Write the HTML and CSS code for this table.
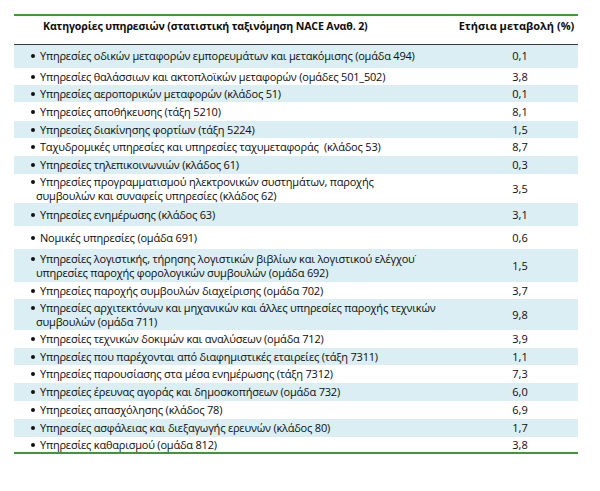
FILE: index.html
```html
<!DOCTYPE html>
<html lang="el">
<head>
<meta charset="utf-8">
<title>Ετήσια μεταβολή</title>
<link rel="stylesheet" href="styles.css">
</head>
<body>
<table class="tbl">
  <thead>
    <tr class="head">
      <th class="c-cat">Κατηγορίες υπηρεσιών (στατιστική ταξινόμηση NACE Αναθ. 2)</th>
      <th class="c-val">Ετήσια μεταβολή (%)</th>
    </tr>
  </thead>
  <tbody>
    <tr class="blue h24"><td class="cat">Υπηρεσίες οδικών μεταφορών εμπορευμάτων και μετακόμισης (ομάδα 494)</td><td class="val">0,1</td></tr>
    <tr class="h17"><td class="cat">Υπηρεσίες θαλάσσιων και ακτοπλοϊκών μεταφορών (ομάδες 501_502)</td><td class="val">3,8</td></tr>
    <tr class="blue h17"><td class="cat">Υπηρεσίες αεροπορικών μεταφορών (κλάδος 51)</td><td class="val">0,1</td></tr>
    <tr class="h19"><td class="cat">Υπηρεσίες αποθήκευσης (τάξη 5210)</td><td class="val">8,1</td></tr>
    <tr class="blue h17"><td class="cat">Υπηρεσίες διακίνησης φορτίων (τάξη 5224)</td><td class="val">1,5</td></tr>
    <tr class="h18"><td class="cat">Ταχυδρομικές υπηρεσίες και υπηρεσίες ταχυμεταφοράς &nbsp;(κλάδος 53)</td><td class="val">8,7</td></tr>
    <tr class="blue h18"><td class="cat">Υπηρεσίες τηλεπικοινωνιών (κλάδος 61)</td><td class="val">0,3</td></tr>
    <tr class="h29"><td class="cat">Υπηρεσίες προγραμματισμού ηλεκτρονικών συστημάτων, παροχής<br>συμβουλών και συναφείς υπηρεσίες (κλάδος 62)</td><td class="val">3,5</td></tr>
    <tr class="blue h23"><td class="cat">Υπηρεσίες ενημέρωσης (κλάδος 63)</td><td class="val">3,1</td></tr>
    <tr class="h23"><td class="cat">Νομικές υπηρεσίες (ομάδα 691)</td><td class="val">0,6</td></tr>
    <tr class="blue h33"><td class="cat">Υπηρεσίες λογιστικής, τήρησης λογιστικών βιβλίων και λογιστικού ελέγχου˙<br>υπηρεσίες παροχής φορολογικών συμβουλών (ομάδα 692)</td><td class="val">1,5</td></tr>
    <tr class="h17"><td class="cat">Υπηρεσίες παροχής συμβουλών διαχείρισης (ομάδα 702)</td><td class="val">3,7</td></tr>
    <tr class="blue h31"><td class="cat">Υπηρεσίες αρχιτεκτόνων και μηχανικών και άλλες υπηρεσίες παροχής τεχνικών<br>συμβουλών (ομάδα 711)</td><td class="val">9,8</td></tr>
    <tr class="h18"><td class="cat">Υπηρεσίες τεχνικών δοκιμών και αναλύσεων (ομάδα 712)</td><td class="val">3,9</td></tr>
    <tr class="blue h17"><td class="cat">Υπηρεσίες που παρέχονται από διαφημιστικές εταιρείες (τάξη 7311)</td><td class="val">1,1</td></tr>
    <tr class="h18"><td class="cat">Υπηρεσίες παρουσίασης στα μέσα ενημέρωσης (τάξη 7312)</td><td class="val">7,3</td></tr>
    <tr class="blue h18"><td class="cat">Υπηρεσίες έρευνας αγοράς και δημοσκοπήσεων (ομάδα 732)</td><td class="val">6,0</td></tr>
    <tr class="h18"><td class="cat">Υπηρεσίες απασχόλησης (κλάδος 78)</td><td class="val">6,9</td></tr>
    <tr class="blue h18"><td class="cat">Υπηρεσίες ασφάλειας και διεξαγωγής ερευνών (κλάδος 80)</td><td class="val">1,7</td></tr>
    <tr class="h16"><td class="cat">Υπηρεσίες καθαρισμού (ομάδα 812)</td><td class="val">3,8</td></tr>
  </tbody>
</table>
</body>
</html>
```

FILE: styles.css
```css
html, body {
  margin: 0;
  padding: 0;
  background: #ffffff;
}

body {
  padding: 14px 0 0 14px;
  font-family: "Open Sans", "Noto Sans", sans-serif;
  font-size: 11px;
  color: #0d0d0d;
}

.tbl {
  width: 564px;
  border-collapse: collapse;
  border-spacing: 0;
  table-layout: fixed;
  border-top: 2px solid #3c9a34;
  border-bottom: 2px solid #3c9a34;
}

.tbl th,
.tbl td {
  box-sizing: border-box;
}

.head th {
  height: 29px;
  padding: 3px 0 0 0;
  vertical-align: top;
  font-weight: bold;
  line-height: 14px;
  white-space: nowrap;
  border-bottom: 1px solid #3a3a3a;
}

.c-cat {
  width: 440px;
  text-align: left;
  padding-left: 29px !important;
  font-size: 10.6px;
  letter-spacing: -0.15px;
}

.c-val {
  text-align: center;
  padding-left: 1px !important;
}

td {
  padding: 0;
  vertical-align: middle;
  line-height: 14px;
}

.cat {
  padding-left: 22px;
  text-indent: -5px;
  white-space: nowrap;
  letter-spacing: -0.2px;
}

.cat::before {
  content: "";
  display: inline-block;
  width: 4px;
  height: 4px;
  border-radius: 50%;
  background: #111111;
  margin-right: 5px;
  vertical-align: 2px;
  text-indent: 0;
}

.val {
  text-align: center;
  padding-left: 8px;
}

.blue td {
  background: #daeef3;
}

.h16 { height: 16px; }
.h17 { height: 17px; }
.h18 { height: 18px; }
.h19 { height: 19px; }
.h23 { height: 23px; }
.h24 { height: 24px; }
.h29 { height: 29px; }
.h31 { height: 31px; }
.h33 { height: 33px; }
```
